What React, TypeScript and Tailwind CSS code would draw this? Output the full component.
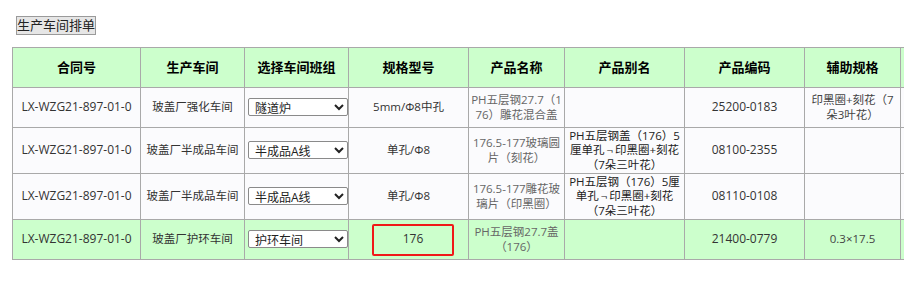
import React from "react";

type Row = {
  contract: string;
  workshop: string;
  team: string;
  spec: string;
  name: string;
  alias: React.ReactNode;
  code: string;
  aux: string;
  tall?: boolean;
  active?: boolean;
};

// the "¬" in the reference renders a bit wider than Open Sans' glyph
const Not = () => <span className="px-[2px]">¬</span>;

const rows: Row[] = [
  {
    contract: "LX-WZG21-897-01-0",
    workshop: "玻盖厂强化车间",
    team: "隧道炉",
    spec: "5mm/Φ8中孔",
    name: "PH五层钢27.7（176）雕花混合盖",
    alias: "",
    code: "25200-0183",
    aux: "印黑圈+刻花（7朵3叶花）",
  },
  {
    contract: "LX-WZG21-897-01-0",
    workshop: "玻盖厂半成品车间",
    team: "半成品A线",
    spec: "单孔/Φ8",
    name: "176.5-177玻璃圆片（刻花）",
    alias: (
      <>
        PH五层钢盖（176）5厘单孔<Not />印黑圈+刻花（7朵三叶花）
      </>
    ),
    code: "08100-2355",
    aux: "",
    tall: true,
  },
  {
    contract: "LX-WZG21-897-01-0",
    workshop: "玻盖厂半成品车间",
    team: "半成品A线",
    spec: "单孔/Φ8",
    name: "176.5-177雕花玻璃片（印黑圈）",
    alias: (
      <>
        PH五层钢（176）5厘单孔<Not />印黑圈+刻花（7朵三叶花）
      </>
    ),
    code: "08110-0108",
    aux: "",
    tall: true,
  },
  {
    contract: "LX-WZG21-897-01-0",
    workshop: "玻盖厂护环车间",
    team: "护环车间",
    spec: "176",
    name: "PH五层钢27.7盖（176）",
    alias: "",
    code: "21400-0779",
    aux: "0.3×17.5",
    active: true,
  },
];

const teams = ["隧道炉", "半成品A线", "护环车间"];

const th = "border border-[#a9a9a9] px-[3px] text-center text-[13px] font-bold text-black";
const td =
  "border border-[#a9a9a9] px-[3px] py-0 text-center align-middle leading-[14.5px] break-all [text-spacing-trim:space-all]";

export default function App() {
  return (
    <div
      className="w-[904px] h-[301px] overflow-hidden bg-white text-[11.5px] text-[#333]"
      style={{ fontFamily: '"Open Sans", "Noto Sans CJK SC", sans-serif' }}
    >
      <div className="pt-4 pl-4">
        <button className="block h-[19px] border border-[#9a9a9a] bg-[#e6e6e6] px-0 text-[13px] leading-[17px] text-[#222]">
          生产车间排单
        </button>
      </div>

      <table className="mt-3 ml-3 border-collapse table-fixed w-[1000px]">
        <colgroup>
          <col className="w-[128px]" />
          <col className="w-[104px]" />
          <col className="w-[104px]" />
          <col className="w-[120px]" />
          <col className="w-[96px]" />
          <col className="w-[120px]" />
          <col className="w-[120px]" />
          <col className="w-[96px]" />
          <col className="w-[112px]" />
        </colgroup>
        <thead>
          <tr className="h-[40px] bg-[#ccffcc]">
            <th className={th}>合同号</th>
            <th className={th}>生产车间</th>
            <th className={th}>选择车间班组</th>
            <th className={th}>规格型号</th>
            <th className={th}>产品名称</th>
            <th className={th}>产品别名</th>
            <th className={th}>产品编码</th>
            <th className={th}>辅助规格</th>
            <th className={th}></th>
          </tr>
        </thead>
        <tbody>
          {rows.map((r, i) => (
            <tr
              key={i}
              className={`${r.tall ? "h-[46px]" : "h-[40px]"} ${r.active ? "bg-[#ccffcc]" : "bg-[#fbfbfd]"}`}
            >
              <td className={`${td} text-[12px]`}>{r.contract}</td>
              <td className={`${td} whitespace-nowrap`}>{r.workshop}</td>
              <td className={td}>
                <select
                  defaultValue={r.team}
                  className="h-[18px] w-[100px] rounded-[2px] border border-[#8a8a8a] bg-white pl-[2px] text-[12px] leading-[16px] text-[#222]"
                >
                  {teams.map((t) => (
                    <option key={t}>{t}</option>
                  ))}
                </select>
              </td>
              <td className={td}>
                {r.active ? (
                  <div className="ml-[20px] flex h-[32px] w-[82px] items-center justify-center rounded-[2px] border-2 border-[#f01818] text-[12px]">
                    {r.spec}
                  </div>
                ) : (
                  r.spec
                )}
              </td>
              <td className={`${td} !px-[2px] text-[#666]`}>{r.name}</td>
              <td className={`${td} text-[#222]`}>{r.alias}</td>
              <td className={`${td} text-[12px]`}>{r.code}</td>
              <td className={`${td} text-[#444]`}>{r.aux}</td>
              <td className={td}>
                <input className="ml-[1px] h-[21px] w-[100px] border border-[#c8c8c8] bg-white" readOnly />
              </td>
            </tr>
          ))}
        </tbody>
      </table>
    </div>
  );
}
